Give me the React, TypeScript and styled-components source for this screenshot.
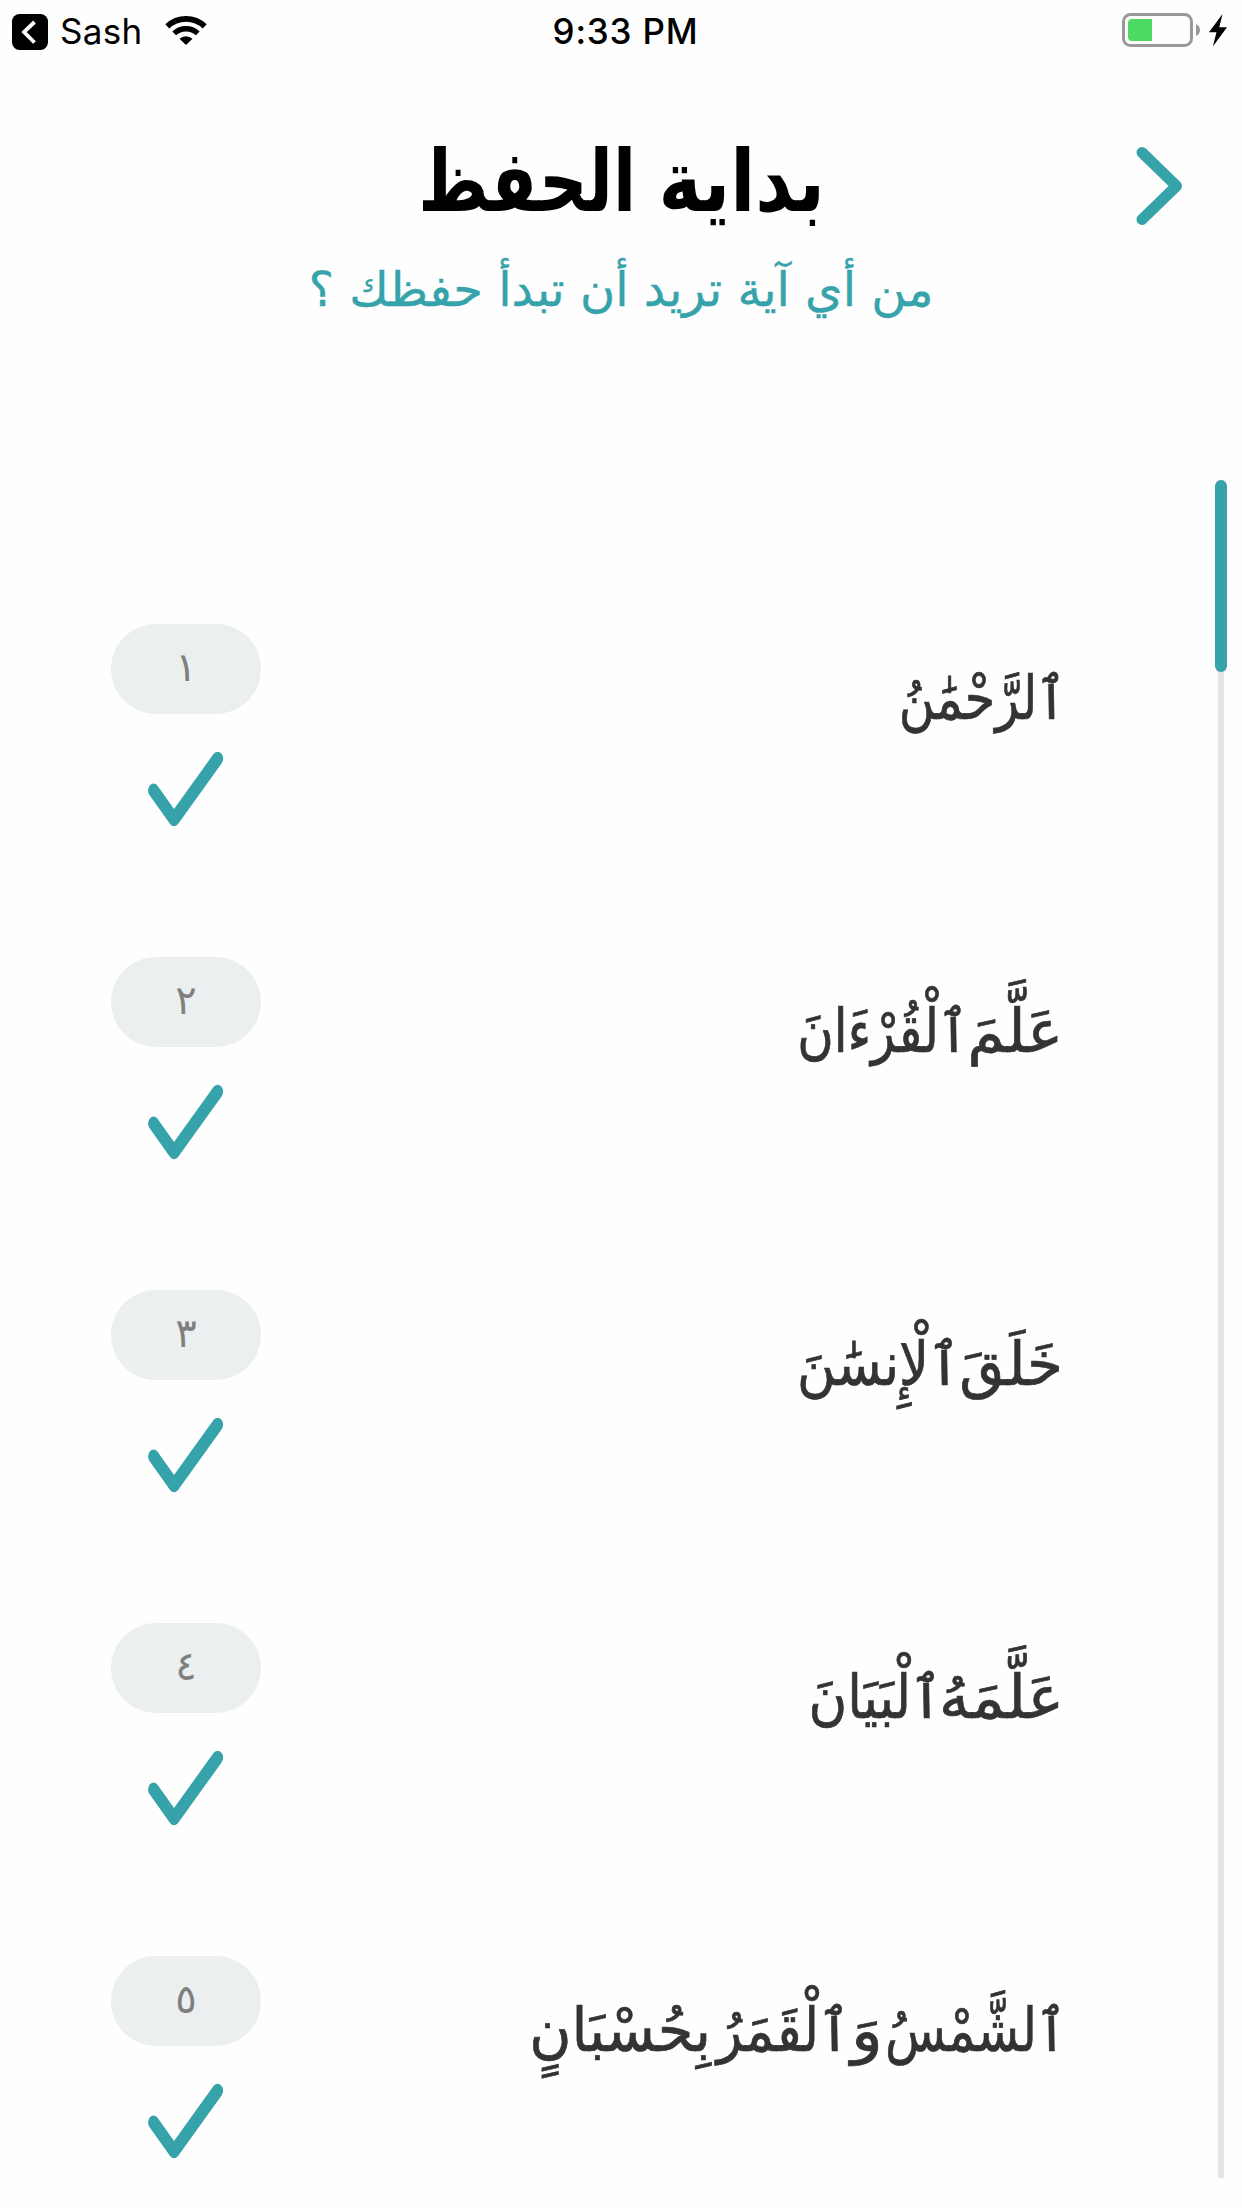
import React from 'react';
import styled, { createGlobalStyle } from 'styled-components';

const teal = '#36a3ab';
const arabic = '"DejaVu Sans", "Noto Sans", sans-serif';

const GlobalStyle = createGlobalStyle`
  *, *::before, *::after { box-sizing: border-box; }
  body { margin: 0; background: #fefefe; }
`;

const Screen = styled.main`
  width: 1242px;
  height: 2208px;
  display: flex;
  flex-direction: column;
  overflow: hidden;
  background: #fefefe;
  font-family: Inter, "Liberation Sans", sans-serif;
`;

const StatusBar = styled.div`
  height: 60px;
  display: grid;
  grid-template-columns: 1fr auto 1fr;
  align-items: start;
  padding: 0 12px;
  color: #000;
`;

const StatusGroup = styled.div<{ $end?: boolean }>`
  display: flex;
  justify-content: ${(p) => (p.$end ? 'flex-end' : 'flex-start')};
  padding-right: ${(p) => (p.$end ? '3px' : '0')};
`;

const Carrier = styled.span`
  font-size: 35px;
  line-height: 62px;
  width: 79px;
  margin: 0 25px 0 12px;
  letter-spacing: 0.3px;
  white-space: nowrap;
`;

const Time = styled.span`
  font-size: 35px;
  font-weight: 550;
  line-height: 62px;
  letter-spacing: 0.8px;
  padding-left: 9px;
  white-space: nowrap;
`;

const Header = styled.header`
  height: 390px;
  display: grid;
  grid-template-columns: 160px 1fr 160px;
  padding-top: 61px;
`;

const Titles = styled.div`
  grid-column: 2;
  display: flex;
  flex-direction: column;
  align-items: center;
`;

const Title = styled.h1`
  display: flex;
  width: 408px;
  margin: 0;
  font: 700 86px/120px ${arabic};
  color: #000;
`;

const Subtitle = styled.p`
  margin: 8px 0 0;
  font: 400 48px/80px ${arabic};
  color: ${teal};
  white-space: nowrap;
  -webkit-text-stroke: 0.4px ${teal};
`;

const BackButton = styled.button`
  grid-column: 3;
  justify-self: end;
  align-self: start;
  width: 46px;
  height: 80px;
  margin: 25px 60px 0 0;
  padding: 0;
  border: 0;
  background: none;
`;

const Body = styled.section`
  flex: 1;
  display: flex;
  padding-top: 30px;
`;

const List = styled.ul`
  flex: 1;
  height: 1728px;
  margin: 0;
  padding: 144px 149px 0 111px;
  overflow: hidden;
  list-style: none;
`;

const Row = styled.li`
  height: 333px;
  display: flex;
  justify-content: space-between;
`;

const Marker = styled.div`
  width: 150px;
  display: flex;
  flex-direction: column;
  align-items: center;
`;

const Pill = styled.div`
  width: 150px;
  height: 90px;
  display: flex;
  align-items: center;
  justify-content: center;
  padding-bottom: 4px;
  border-radius: 45px;
  background: #ebeff0;
  color: #7f7f7f;
  font: 400 40px/60px ${arabic};
`;

const Tick = styled.svg`
  width: 76px;
  height: 76px;
  margin-top: 37px;
`;

const Verse = styled.p<{ $inset: number }>`
  display: flex;
  margin: 0;
  padding: 24px ${(p) => p.$inset}px 0 0;
  font: 400 60px/100px ${arabic};
  color: #333;
  -webkit-text-stroke: 0.7px #333;
`;

const Word = styled.span<{ $width: number; $stretch: number }>`
  flex: none;
  width: ${(p) => p.$width}px;
  white-space: nowrap;
  transform: scaleX(${(p) => p.$stretch});
  transform-origin: right center;
`;

const Track = styled.div`
  width: 12px;
  height: 1698px;
  margin-right: 15px;
  background: linear-gradient(#e5e5e5, #e5e5e5) center / 6px 100% no-repeat;
`;

const Thumb = styled.div`
  width: 12px;
  height: 192px;
  border-radius: 6px;
  background: ${teal};
`;

type SpacedWord = { text: string; width: number; stretch: number };

const title: SpacedWord[] = [
  { text: 'بداية', width: 189, stretch: 0.85 },
  { text: 'الحفظ', width: 219, stretch: 0.784 },
];

const verses: { number: string; inset: number; words: SpacedWord[] }[] = [
  {
    number: '١',
    inset: 0,
    words: [{ text: 'ٱلرَّحْمَٰنُ', width: 165, stretch: 0.82 }],
  },
  {
    number: '٢',
    inset: 3,
    words: [
      { text: 'عَلَّمَ', width: 95, stretch: 1 },
      { text: 'ٱلْقُرْءَانَ', width: 168, stretch: 0.83 },
    ],
  },
  {
    number: '٣',
    inset: 3,
    words: [
      { text: 'خَلَقَ', width: 103, stretch: 0.97 },
      { text: 'ٱلْإِنسَٰنَ', width: 163, stretch: 0.88 },
    ],
  },
  {
    number: '٤',
    inset: 2,
    words: [
      { text: 'عَلَّمَهُ', width: 122, stretch: 1.02 },
      { text: 'ٱلْبَيَانَ', width: 132, stretch: 0.88 },
    ],
  },
  {
    number: '٥',
    inset: 0,
    words: [
      { text: 'ٱلشَّمْسُ', width: 183, stretch: 0.83 },
      { text: 'وَ', width: 33, stretch: 1.1 },
      { text: 'ٱلْقَمَرُ', width: 139, stretch: 0.88 },
      { text: 'بِحُسْبَانٍ', width: 179, stretch: 0.96 },
    ],
  },
];

const Words = ({ words }: { words: SpacedWord[] }) => (
  <>
    {words.map((word) => (
      <Word key={word.text} $width={word.width} $stretch={word.stretch}>{word.text}</Word>
    ))}
  </>
);

const ReturnIcon = () => (
  <svg width="36" height="60" viewBox="0 0 36 60">
    <rect y="14" width="36" height="36" rx="7.5" />
    <path d="M22.500 22 12 32l10.500 10.500" fill="none" stroke="#fff" strokeWidth="3.800" />
  </svg>
);

const WifiIcon = () => (
  <svg width="44" height="60" viewBox="164 0 44 60">
    <g fill="none" stroke="#000">
      <path d="M167.300 26.300a27 27 0 0 1 37.400 0" strokeWidth="5.800" />
      <path d="M174.200 33.400a17.300 17.300 0 0 1 23.600 0" strokeWidth="5.400" />
    </g>
    <path d="M179.500 38.700a9.500 9.500 0 0 1 13 0L186 45z" />
  </svg>
);

const BatteryIcon = () => (
  <svg width="106" height="60" viewBox="1121 0 106 60">
    <rect x="1123.500" y="14.500" width="68" height="31" rx="7" fill="none" stroke="#999" strokeWidth="3" />
    <path d="M1132 19h20v22h-20a4 4 0 0 1-4-4V23a4 4 0 0 1 4-4z" fill="#4cd964" />
    <path d="M1196 24q4 2 4 6t-4 6z" fill="#999" />
    <path d="M1222.500 14 1209 32.300h7.500L1212.800 46.500 1227 27.300h-7.700z" />
  </svg>
);

export default function App() {
  return (
    <>
      <GlobalStyle />
      <Screen>
        <StatusBar>
          <StatusGroup>
            <ReturnIcon />
            <Carrier>Sash</Carrier>
            <WifiIcon />
          </StatusGroup>
          <Time>9:33 PM</Time>
          <StatusGroup $end>
            <BatteryIcon />
          </StatusGroup>
        </StatusBar>
        <Header>
          <Titles>
            <Title dir="rtl">
              <Words words={title} />
            </Title>
            <Subtitle dir="rtl">من أي آية تريد أن تبدأ حفظك ؟</Subtitle>
          </Titles>
          <BackButton aria-label="رجوع">
            <svg width="46" height="80" viewBox="0 0 46 80">
              <path d="M6 6.500 40.500 40 6 73.500" fill="none" stroke={teal} strokeWidth="11" strokeLinecap="round" strokeLinejoin="round" />
            </svg>
          </BackButton>
        </Header>
        <Body>
          <List>
            {verses.map((verse) => (
              <Row key={verse.number}>
                <Marker>
                  <Pill>{verse.number}</Pill>
                  <Tick viewBox="0 0 76 76">
                    <path d="M7 39.500 32.500 68.300 87 7.700" transform="scale(0.8 1)" fill="none" stroke={teal} strokeWidth="13.800" strokeLinecap="round" strokeLinejoin="round" />
                  </Tick>
                </Marker>
                <Verse dir="rtl" $inset={verse.inset}>
                  <Words words={verse.words} />
                </Verse>
              </Row>
            ))}
          </List>
          <Track>
            <Thumb />
          </Track>
        </Body>
      </Screen>
    </>
  );
}
